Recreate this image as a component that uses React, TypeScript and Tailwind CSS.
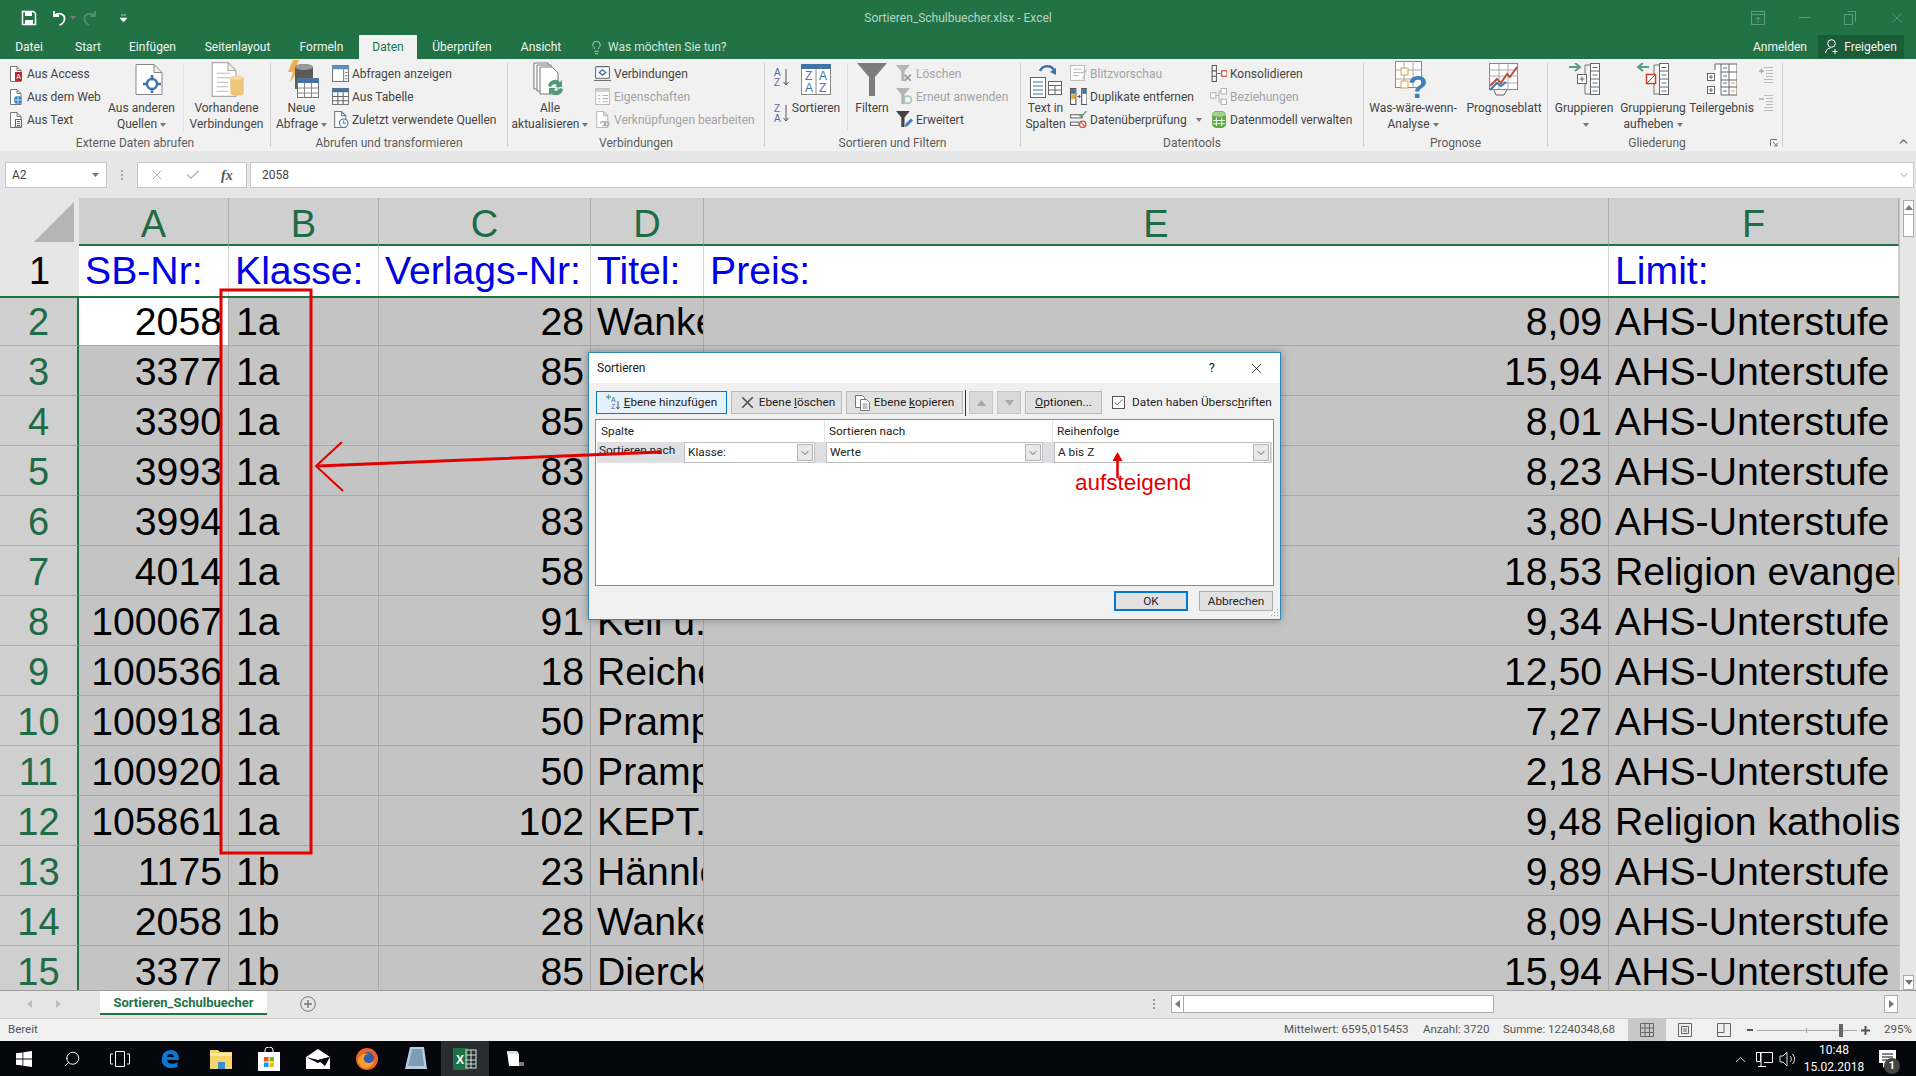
import { ReactNode } from "react";
import { Check, ChevronDown, ChevronUp, Lightbulb, Search, X } from "lucide-react";
import clsx from "clsx";

const rows = [
  { n: 2, a: "2058", b: "1a", c: "28", d: "Wanke", e: "8,09", f: "AHS-Unterstufe" },
  { n: 3, a: "3377", b: "1a", c: "85", d: "Dierck", e: "15,94", f: "AHS-Unterstufe" },
  { n: 4, a: "3390", b: "1a", c: "85", d: "", e: "8,01", f: "AHS-Unterstufe" },
  { n: 5, a: "3993", b: "1a", c: "83", d: "", e: "8,23", f: "AHS-Unterstufe" },
  { n: 6, a: "3994", b: "1a", c: "83", d: "", e: "3,80", f: "AHS-Unterstufe" },
  { n: 7, a: "4014", b: "1a", c: "58", d: "", e: "18,53", f: "Religion evangelisch" },
  { n: 8, a: "100067", b: "1a", c: "91", d: "Keil u.", e: "9,34", f: "AHS-Unterstufe" },
  { n: 9, a: "100536", b: "1a", c: "18", d: "Reichel", e: "12,50", f: "AHS-Unterstufe" },
  { n: 10, a: "100918", b: "1a", c: "50", d: "Pramper", e: "7,27", f: "AHS-Unterstufe" },
  { n: 11, a: "100920", b: "1a", c: "50", d: "Pramper", e: "2,18", f: "AHS-Unterstufe" },
  { n: 12, a: "105861", b: "1a", c: "102", d: "KEPT.", e: "9,48", f: "Religion katholisch" },
  { n: 13, a: "1175", b: "1b", c: "23", d: "Hännle", e: "9,89", f: "AHS-Unterstufe" },
  { n: 14, a: "2058", b: "1b", c: "28", d: "Wanke", e: "8,09", f: "AHS-Unterstufe" },
  { n: 15, a: "3377", b: "1b", c: "85", d: "Dierck", e: "15,94", f: "AHS-Unterstufe" },
];

const Caret = () => (
  <svg width="6" height="4" viewBox="0 0 6 4" className="inline-block ml-[3px] align-middle">
    <path d="M0 0h6L3 4z" fill="#777" />
  </svg>
);

const Page = ({ s = "#777" }: { s?: string }) => (
  <path d="M2.5.5h6.5l4 4v11h-10.500z M9 .5v4h4" fill="#fff" stroke={s} />
);

const Ic = ({ children, size = 16, box = 16 }: { children: ReactNode; size?: number; box?: number }) => (
  <svg width={size} height={size} viewBox={`0 0 ${box} ${box}`}>{children}</svg>
);

const AccessIcon = () => (
  <Ic>
    <Page />
    <rect x="7" y="6" width="7" height="9" fill="#b7282e" />
    <text x="8.300" y="13" fontSize="7" fill="#fff" fontFamily="Liberation Sans">A</text>
  </Ic>
);
const WebIcon = () => (
  <Ic>
    <Page />
    <circle cx="10" cy="11" r="4" fill="#3a7fc4" />
    <path d="M6 11h8M10 7v8" stroke="#fff" strokeWidth=".7" />
  </Ic>
);
const TextIcon = () => (
  <Ic>
    <Page />
    <rect x="7.500" y="7.500" width="6" height="7.500" fill="#fff" stroke="#666" />
    <path d="M9 9.500h3M9 11.500h3M9 13.500h3" stroke="#666" />
  </Ic>
);
const TableIcon = ({ lines = false, hd = "#3f74a8" }: { lines?: boolean; hd?: string }) => (
  <Ic size={17}>
    <rect x=".5" y=".5" width="15" height="15" fill="#fff" stroke="#777" />
    <rect x=".5" y=".5" width="15" height="3.500" fill={hd} />
    {lines ? (
      <path d="M5.500 4v11.500M10.500 4v11.500M1 8h14M1 12h14" stroke="#666" />
    ) : (
      <path d="M11 4v11.500M12.500 7h2M12.500 10h2M12.500 13h2" stroke="#777" />
    )}
  </Ic>
);
const RecentIcon = () => (
  <Ic size={17}>
    <Page />
    <circle cx="11" cy="11.500" r="4" fill="#fff" stroke="#3f74a8" />
    <path d="M11 9v2.500h2" stroke="#3f74a8" fill="none" />
  </Ic>
);
const OtherSources = () => (
  <Ic size={32} box={32}>
    <path d="M3 .5h18l8 8v22h-26z M21 .5v8h8" fill="#fff" stroke="#888" />
    <circle cx="19" cy="20" r="5" fill="none" stroke="#3f74a8" strokeWidth="2.500" />
    <path d="M19 11v4M19 25v4M10 20h4M24 20h4" stroke="#3f74a8" strokeWidth="2.500" />
  </Ic>
);
const Existing = () => (
  <Ic size={36} box={32}>
    <path d="M2 .5h14l7 7v23h-21z M16 .5v7h7" fill="#fff" stroke="#aaa" />
    <path d="M6 10h12M6 14h12M6 18h10M6 22h10M6 26h10" stroke="#bbb" />
    <path d="M18 14a6 2 0 0 1 12 0v14a6 2 0 0 1-12 0z" fill="#edc67a" />
    <ellipse cx="24" cy="14" rx="6" ry="2" fill="#f5dca5" />
  </Ic>
);
const NewQuery = () => (
  <svg width="34" height="40" viewBox="0 0 34 40">
    <path d="M8 0h6l-4 9h5l-10 13 3-10h-5z" fill="#eab04a" />
    <path d="M10 7a9 3 0 0 1 18 0v22h-18z" fill="#5b5b5b" />
    <ellipse cx="19" cy="7" rx="9" ry="3" fill="#9a9a9a" />
    <rect x="12.500" y="18.500" width="21" height="19" fill="#fff" stroke="#777" />
    <rect x="12.500" y="18.500" width="21" height="4.500" fill="#3f74a8" />
    <path d="M19.500 23v14M26.500 23v14M13 28h20M13 33h20" stroke="#888" />
  </svg>
);
const Refresh = () => (
  <svg width="34" height="38" viewBox="0 0 34 38">
    <path d="M1 2h14v26h-14z" fill="#fff" stroke="#777" />
    <path d="M4 4h14v26h-14z" fill="#fff" stroke="#777" />
    <path d="M7 6h12l6 6v21h-18z" fill="#fff" stroke="#777" />
    <path d="M15 25a7 7 0 0 1 12-4l2-2v7h-7l2-2a4 4 0 0 0-6 2zM30 28a7 7 0 0 1-12 4l-2 2v-7h7l-2 2a4 4 0 0 0 6-2z" fill="#4f9a7c" />
  </svg>
);
const ConnIcon = () => (
  <Ic size={17}>
    <rect x="1.500" y="1.500" width="13" height="11" rx="1" fill="#fff" stroke="#666" />
    <path d="M0 14.500h16" stroke="#666" />
    <path d="M8 4.500l3 2.500-3 2.500-3-2.500z" fill="none" stroke="#3f74a8" strokeWidth="1.300" />
  </Ic>
);
const PropIcon = () => (
  <Ic size={17}>
    <rect x="1.500" y=".5" width="13" height="15" fill="#fff" stroke="#bbb" />
    <rect x="1.500" y=".5" width="13" height="3" fill="#ccc" />
    <path d="M4 7h2M8 7h5M4 10h2M8 10h5M4 13h2M8 13h5" stroke="#b5b5b5" />
  </Ic>
);
const LinkIcon = () => (
  <Ic size={17}>
    <Page s="#bbb" />
    <path d="M6 12a2 2 0 0 1 2-2h1a2 2 0 0 1 0 4H8M9 12h3a2 2 0 0 1 0 0" fill="none" stroke="#a8a8a8" />
    <circle cx="12" cy="12" r="2" fill="none" stroke="#a8a8a8" />
  </Ic>
);
const AZ = ({ up }: { up?: boolean }) => (
  <svg width="16" height="21" viewBox="0 0 16 21" fontFamily="Liberation Sans" fontSize="10">
    <text x="0" y="9" fill={up ? "#7b5ea7" : "#3f74a8"}>{up ? "Z" : "A"}</text>
    <text x="0" y="19" fill={up ? "#3f74a8" : "#7b5ea7"}>{up ? "A" : "Z"}</text>
    <path d="M12 2v16M9.500 15l2.500 3 2.500-3" fill="none" stroke="#555" />
  </svg>
);
const SortBig = () => (
  <svg width="30" height="31" viewBox="0 0 30 31" fontFamily="Liberation Sans" fontSize="12">
    <rect x=".5" y=".5" width="29" height="30" fill="#fff" stroke="#888" />
    <rect x="0" y="0" width="30" height="5" fill="#3f74a8" />
    <path d="M15 5v26" stroke="#888" />
    <text x="4" y="16" fill="#7b5ea7">Z</text>
    <text x="4" y="28" fill="#3f74a8">A</text>
    <text x="18" y="16" fill="#3f74a8">A</text>
    <text x="18" y="28" fill="#7b5ea7">Z</text>
  </svg>
);
const Funnel = ({ size = 30 }: { size?: number }) => (
  <svg width={size} height={size + 3} viewBox="0 0 30 33">
    <path d="M0 0h30L18 14v19h-6V14z" fill="#7d7d7d" />
  </svg>
);
const SmallFunnel = ({ mark }: { mark: "x" | "r" | "p" }) => (
  <Ic size={17}>
    <path d="M0 0h13L8 6v9H5V6z" fill={mark === "p" ? "#444" : "#b5b5b5"} />
    {mark === "x" && <path d="M8 9l6 6M14 9l-6 6" stroke="#9a9a9a" strokeWidth="1.500" />}
    {mark === "r" && <circle cx="11" cy="11" r="3.500" fill="none" stroke="#9fc4b4" strokeWidth="1.500" />}
    {mark === "p" && <path d="M8 15l1-3 5-5 2 2-5 5z" fill="#3f7fc0" />}
  </Ic>
);
const TextCols = () => (
  <svg width="32" height="36" viewBox="0 0 32 36">
    <path d="M10 9a8 8 0 0 1 14-1" fill="none" stroke="#3f74a8" strokeWidth="2.500" />
    <path d="M20 10l6-4v7z" fill="#3f74a8" />
    <rect x=".5" y="15.500" width="15" height="20" fill="#fff" stroke="#666" />
    <path d="M3 20h10M3 24h10M3 28h10M3 32h10" stroke="#3f74a8" />
    <rect x="18.500" y="19.500" width="13" height="13" fill="#fff" stroke="#666" />
    <path d="M19 23.500h12M25 23.500v9M19 28h12" stroke="#666" />
  </svg>
);
const Flash = () => (
  <Ic size={17}>
    <rect x=".5" y=".5" width="13" height="14" fill="#fff" stroke="#bbb" />
    <path d="M3 4h8M3 7h8M3 10h5M11 8l4-3-3 8" fill="none" stroke="#bbb" />
  </Ic>
);
const Dupes = () => (
  <Ic size={17}>
    <rect x=".5" y=".5" width="5" height="15" fill="#fff" stroke="#555" />
    <rect x="11" y=".5" width="5" height="15" fill="#fff" stroke="#555" />
    <rect x="1" y="1" width="4" height="4.500" fill="#3f74a8" />
    <rect x="1" y="6" width="4" height="4.500" fill="#e0a93f" />
    <rect x="11.500" y="1" width="4" height="4.500" fill="#3f74a8" />
    <path d="M7 8h3M9 6.500v3" stroke="#555" />
  </Ic>
);
const Validate = () => (
  <Ic size={17}>
    <rect x=".5" y="3.500" width="11" height="3" fill="#fff" stroke="#666" />
    <rect x=".5" y="10.500" width="8" height="3" fill="#fff" stroke="#666" />
    <path d="M8 3l2.500 2.500L15.500 0" fill="none" stroke="#5a9e6f" strokeWidth="1.300" />
    <circle cx="12" cy="12.500" r="3" fill="#fff" stroke="#d2513f" strokeWidth="1.200" />
    <path d="M10 10.500l4 4" stroke="#d2513f" strokeWidth="1.200" />
  </Ic>
);
const Consolidate = () => (
  <Ic size={17}>
    <path d="M2 .5h4v15h-4zM2 5.500h4M2 10.500h4" fill="#fff" stroke="#555" />
    <path d="M7 8h3" stroke="#3f74a8" />
    <rect x="11" y="5.500" width="5" height="5" fill="#fff" stroke="#c8382e" />
  </Ic>
);
const Relations = () => (
  <Ic size={17}>
    <rect x=".5" y="4.500" width="5" height="5" fill="#fff" stroke="#b5b5b5" />
    <rect x="10.500" y=".5" width="5" height="5" fill="#fff" stroke="#b5b5b5" />
    <rect x="10.500" y="10.500" width="5" height="5" fill="#fff" stroke="#b5b5b5" />
    <path d="M5.500 7h3v-4h2M8.500 7v6h2" fill="none" stroke="#b5b5b5" />
  </Ic>
);
const DataModel = () => (
  <Ic size={17}>
    <path d="M2 3a6 3 0 0 1 13 0v10a6 3 0 0 1-13 0z" fill="#5ea647" />
    <ellipse cx="8.500" cy="3" rx="6.500" ry="2.500" fill="#a7d08f" />
    <path d="M6 6v8M11 6v8M3 9h11M3 12h11" stroke="#e9f4e3" />
  </Ic>
);
const WhatIf = () => (
  <svg width="36" height="38" viewBox="0 0 36 38">
    <rect x=".5" y=".5" width="26" height="26" fill="#fff" stroke="#888" />
    <path d="M.5 9h26M.5 18h26M9 .5v26M18 .5v26" stroke="#a8a8a8" />
    <rect x="6" y="7" width="7" height="7" fill="#fff" stroke="#d9a04b" />
    <rect x="6" y="20" width="7" height="7" fill="#fff" stroke="#d9a04b" />
    <text x="13" y="37" fontSize="32" fontWeight="700" fill="#3f7fc0" fontFamily="Liberation Sans">?</text>
  </svg>
);
const Forecast = () => (
  <svg width="30" height="34" viewBox="0 0 30 34">
    <rect x=".5" y=".5" width="28" height="26" fill="#fff" stroke="#888" />
    <path d="M.5 7h28M.5 13h28M.5 20h28M10 .5v26M19 .5v26" stroke="#aaa" />
    <path d="M1 23l7-7 4 4 6-9 3 3 7-10" fill="none" stroke="#b9533f" strokeWidth="2" />
    <path d="M1 27l7-7 4 3 5-4" fill="none" stroke="#3f74a8" strokeWidth="2" />
    <path d="M5 27l2 5h8l3-5" fill="none" stroke="#666" />
  </svg>
);
const OutlineCol = ({ x }: { x: number }) => (
  <g>
    <rect x={x} y=".5" width="9" height="31" fill="#fff" stroke="#666" />
    <path d={`M${x} 8h9M${x} 16h9M${x} 24h9`} stroke="#666" />
    <path d={`M${x + 2} 4.500h5M${x + 2} 12h5M${x + 2} 20h5M${x + 2} 28h5`} stroke="#3f74a8" />
  </g>
);
const GroupIcon = ({ ungroup }: { ungroup?: boolean }) => (
  <svg width="32" height="33" viewBox="0 0 32 33">
    <path d={ungroup ? "M12 4H2M6 0L1 4l5 4" : "M1 4h10M7 0l5 4-5 4"} fill="none" stroke="#5a9a87" strokeWidth="2" />
    <path d="M22 2h-5v29h5" fill="none" stroke="#777" />
    <rect x="9.500" y="11.500" width="9" height="9" fill="#fff" stroke={ungroup ? "#c8452f" : "#666"} strokeWidth={ungroup ? 1.500 : 1} />
    {ungroup ? <path d="M10 20l8-8" stroke="#c8452f" /> : <path d="M11.500 16h5M14 13.500v5" stroke="#666" />}
    <OutlineCol x={22.500} />
  </svg>
);
const Subtotal = () => (
  <svg width="30" height="33" viewBox="0 0 30 33">
    <path d="M8 1h22v31H8z" fill="#fff" />
    <path d="M14 1h-6v6M30 1H14v31h16V1zM22 1v31M14 9h16M14 17h16M14 24h16" fill="none" stroke="#666" />
    <rect x=".5" y="10.500" width="7" height="7" fill="#fff" stroke="#666" />
    <rect x=".5" y="23.500" width="7" height="7" fill="#fff" stroke="#666" />
    <path d="M2 14h4M4 12v4M2 27h4M4 25v4" stroke="#666" />
    <path d="M16 5h4M16 13h4M16 20h4M16 28h4" stroke="#3f74a8" />
    <path d="M24 20h4M24 28h4" stroke="#d9a04b" />
  </svg>
);
const MiniOutline = ({ plus }: { plus?: boolean }) => (
  <svg width="15" height="16" viewBox="0 0 15 16">
    <path d="M5 .5h9M7 3.500h7M7 6.500h7M7 9.500h7M5 12.500h9M5 15.500h9" stroke="#bdbdbd" />
    <path d={plus ? "M0 4h5M2.500 1.500v5" : "M0 4h5"} stroke="#8db6a8" strokeWidth="1.300" />
  </svg>
);

const Small = ({ icon, label, off, caret }: { icon: ReactNode; label: string; off?: boolean; caret?: boolean }) => (
  <div className={clsx("flex items-center h-[23px] gap-[3px] whitespace-nowrap", off && "text-[#a3a3a3]")}>
    <span className="w-[17px] h-[17px] flex items-center justify-center shrink-0">{icon}</span>
    <span>{label}</span>
    {caret && <Caret />}
  </div>
);

const Large = ({ icon, lines, className, caret }: { icon: ReactNode; lines: string[]; className: string; caret?: boolean }) => (
  <div className={clsx("flex flex-col items-center shrink-0", className)}>
    <div className="h-[41px] flex items-center justify-center">{icon}</div>
    {lines.map((l, i) => (
      <div key={l} className="h-[16px] leading-[16px] whitespace-nowrap">
        {l}
        {caret && lines.length > 1 && i === lines.length - 1 && <Caret />}
      </div>
    ))}
    {caret && lines.length === 1 && (
      <div className="h-[16px] leading-[16px]"><Caret /></div>
    )}
  </div>
);

const Col = ({ children, className }: { children: ReactNode; className?: string }) => (
  <div className={clsx("flex flex-col pt-[3px] shrink-0", className)}>{children}</div>
);

const Group = ({ title, className, titleClass, children }: { title: string; className: string; titleClass?: string; children: ReactNode }) => (
  <div className={clsx("flex shrink-0", className)}>
    <div className="flex-1 flex flex-col min-w-0">
      <div className="h-[76px] flex">{children}</div>
      <div className={clsx("h-[16px] leading-[16px] text-center text-[#5c5c5c] whitespace-nowrap", titleClass)}>{title}</div>
    </div>
    <div className="w-px my-[4px] bg-[#d2d2d2]" />
  </div>
);

const TitleBar = () => (
  <div className="h-[35px] bg-[#217346] flex items-center relative shrink-0">
    <div className="flex items-center pl-[21px]">
      <svg width="16" height="16" viewBox="0 0 16 16">
        <path d="M1.500 1.500h11l2 2v11h-13z" fill="none" stroke="#fff" strokeWidth="1.500" />
        <path d="M4 2h7v4H4zM4 10h8v5H4z" fill="#fff" />
      </svg>
      <div className="flex items-center ml-[14px]">
        <svg width="16" height="16" viewBox="0 0 16 16">
          <path d="M3 1v5h5M3.500 5.500C8 2 14 4 13.500 9c-.3 3-2 5-5 6" fill="none" stroke="#fff" strokeWidth="1.800" />
        </svg>
        <Caret />
      </div>
      <div className="flex items-center ml-[6px]">
        <svg width="16" height="16" viewBox="0 0 16 16">
          <path d="M13 1v5H8M12.500 5.500C8 2 2 4 2.500 9c.3 3 2 5 5 6" fill="none" stroke="#4f8f6c" strokeWidth="1.800" />
        </svg>
      </div>
      <svg width="7" height="8" viewBox="0 0 7 8" className="ml-[22px]">
        <path d="M1 1h5M0 4h7L3.500 8z" fill="#fff" stroke="#fff" strokeWidth=".6" />
      </svg>
    </div>
    <div className="absolute left-[838px] w-[240px] text-center text-[#b7d3c3] whitespace-nowrap">Sortieren_Schulbuecher.xlsx - Excel</div>
    <div className="ml-auto flex items-center text-[#5f9c7c]">
      <span className="w-[46px] flex justify-center">
        <svg width="14" height="14" viewBox="0 0 14 14"><path d="M.5.5h13v13H.5zM0 3.500h14M7 12V6M4.500 8.500L7 6l2.500 2.500" fill="none" stroke="currentColor" /></svg>
      </span>
      <span className="w-[46px] flex justify-center"><span className="w-[11px] h-px bg-current" /></span>
      <span className="w-[46px] flex justify-center">
        <svg width="12" height="14" viewBox="0 0 12 14"><path d="M3.500.5h8v10M.5 3.500h8v10h-8z" fill="none" stroke="currentColor" /></svg>
      </span>
      <span className="w-[38px] ml-[5px] flex justify-center"><X size={18} strokeWidth={1} /></span>
    </div>
  </div>
);

const Tab = ({ label, className }: { label: string; className: string }) => (
  <div className={clsx("text-center leading-[24px] shrink-0", className)}>{label}</div>
);

const TabRow = () => (
  <div className="h-[24px] bg-[#217346] flex text-[#f2f7f4] shrink-0">
    <Tab label="Datei" className="w-[58px]" />
    <Tab label="Start" className="w-[60px]" />
    <Tab label="Einfügen" className="w-[69px]" />
    <Tab label="Seitenlayout" className="w-[101px]" />
    <Tab label="Formeln" className="w-[71px] pr-[4px]" />
    <Tab label="Daten" className="w-[58px] bg-[#f1f1f1] text-[#217346]" />
    <Tab label="Überprüfen" className="w-[90px]" />
    <Tab label="Ansicht" className="w-[68px]" />
    <div className="flex items-center gap-[4px] pl-[14px] text-[#d4e5db]">
      <Lightbulb size={15} strokeWidth={1.200} />
      <span>Was möchten Sie tun?</span>
    </div>
    <div className="ml-auto flex">
      <div className="leading-[24px] pr-[11px]">Anmelden</div>
      <div className="w-[86px] h-[23px] bg-[#1a5c38] flex items-center justify-center gap-[4px] mr-[12px]">
        <svg width="15" height="15" viewBox="0 0 15 15">
          <circle cx="6.500" cy="4.500" r="3.800" fill="none" stroke="#fff" />
          <path d="M.5 14c.5-3 2.500-5 5-5M10 10v5M7.500 12.500h5" fill="none" stroke="#fff" />
        </svg>
        <span>Freigeben</span>
      </div>
    </div>
  </div>
);

const Ribbon = () => (
  <div className="h-[92px] bg-[#f1f1f1] flex text-[#444] shrink-0">
    <Group title="Externe Daten abrufen" className="w-[271px]">
      <Col className="w-[100px] pl-[7px]">
        <Small icon={<AccessIcon />} label="Aus Access" />
        <Small icon={<WebIcon />} label="Aus dem Web" />
        <Small icon={<TextIcon />} label="Aus Text" />
      </Col>
      <Large icon={<span className="pl-[14px] flex"><OtherSources /></span>} lines={["Aus anderen", "Quellen"]} caret className="w-[83px]" />
      <div className="w-px my-[4px] bg-[#e2e2e2]" />
      <Large icon={<span className="pl-[3px] flex"><Existing /></span>} lines={["Vorhandene", "Verbindungen"]} className="w-[85px]" />
    </Group>
    <Group title="Abrufen und transformieren" className="w-[237px]">
      <Large icon={<NewQuery />} lines={["Neue", "Abfrage"]} caret className="w-[61px]" />
      <Col>
        <Small icon={<TableIcon hd="#5b8fc0" />} label="Abfragen anzeigen" />
        <Small icon={<TableIcon lines />} label="Aus Tabelle" />
        <Small icon={<RecentIcon />} label="Zuletzt verwendete Quellen" />
      </Col>
    </Group>
    <Group title="Verbindungen" className="w-[257px]">
      <Large icon={<Refresh />} lines={["Alle", "aktualisieren"]} caret className="w-[84px]" />
      <Col className="pl-[2px]">
        <Small icon={<ConnIcon />} label="Verbindungen" />
        <Small icon={<PropIcon />} label="Eigenschaften" off />
        <Small icon={<LinkIcon />} label="Verknüpfungen bearbeiten" off />
      </Col>
    </Group>
    <Group title="Sortieren und Filtern" className="w-[256px]">
      <div className="w-[27px] pl-[9px] pt-[8px] flex flex-col gap-[15px] shrink-0">
        <AZ />
        <AZ up />
      </div>
      <Large icon={<SortBig />} lines={["Sortieren"]} className="w-[48px]" />
      <div className="w-px my-[5px] ml-[7px] bg-[#dcdcdc]" />
      <Large icon={<Funnel />} lines={["Filtern"]} className="w-[48px]" />
      <Col>
        <Small icon={<SmallFunnel mark="x" />} label="Löschen" off />
        <Small icon={<SmallFunnel mark="r" />} label="Erneut anwenden" off />
        <Small icon={<SmallFunnel mark="p" />} label="Erweitert" />
      </Col>
    </Group>
    <Group title="Datentools" className="w-[343px]">
      <Large icon={<TextCols />} lines={["Text in", "Spalten"]} className="w-[49px]" />
      <Col className="w-[140px]">
        <Small icon={<Flash />} label="Blitzvorschau" off />
        <Small icon={<Dupes />} label="Duplikate entfernen" />
        <div className="flex items-center">
          <Small icon={<Validate />} label="Datenüberprüfung" />
          <span className="ml-[6px]"><Caret /></span>
        </div>
      </Col>
      <Col>
        <Small icon={<Consolidate />} label="Konsolidieren" />
        <Small icon={<Relations />} label="Beziehungen" off />
        <Small icon={<DataModel />} label="Datenmodell verwalten" />
      </Col>
    </Group>
    <Group title="Prognose" className="w-[184px]">
      <Large icon={<WhatIf />} lines={["Was-wäre-wenn-", "Analyse"]} caret className="w-[98px]" />
      <Large icon={<Forecast />} lines={["Prognoseblatt"]} className="w-[84px]" />
    </Group>
    <Group title="Gliederung" titleClass="pr-[16px]" className="w-[235px] relative">
      <Large icon={<GroupIcon />} lines={["Gruppieren"]} caret className="w-[72px]" />
      <Large icon={<GroupIcon ungroup />} lines={["Gruppierung", "aufheben"]} caret className="w-[66px]" />
      <Large icon={<Subtotal />} lines={["Teilergebnis"]} className="w-[71px]" />
      <div className="flex flex-col gap-[12px] pt-[8px] pl-[2px]">
        <MiniOutline plus />
        <MiniOutline />
      </div>
      <svg width="8" height="8" viewBox="0 0 8 8" className="absolute right-[5px] bottom-[4px]">
        <path d="M.5 7V.5H7M3 3l4 4M7 4v3H4" fill="none" stroke="#777" />
      </svg>
    </Group>
    <div className="flex-1 flex items-end justify-end pr-[6px] pb-[3px]">
      <ChevronUp size={13} strokeWidth={2.500} className="text-[#666]" />
    </div>
  </div>
);

const FormulaBar = () => (
  <div className="h-[47px] bg-[#e6e6e6] pt-[11px] flex gap-[3px] pl-[5px] pr-[2px] text-[#444] shrink-0">
    <div className="w-[102px] h-[26px] bg-white border border-[#c6c6c6] flex items-center justify-between pl-[6px] pr-[7px]">
      <span>A2</span>
      <svg width="7" height="4" viewBox="0 0 7 4"><path d="M0 0h7L3.500 4z" fill="#777" /></svg>
    </div>
    <div className="w-[24px] h-[26px] flex flex-col items-center justify-center gap-[2px]">
      <span className="w-[2px] h-[2px] bg-[#a8a8a8]" />
      <span className="w-[2px] h-[2px] bg-[#a8a8a8]" />
      <span className="w-[2px] h-[2px] bg-[#a8a8a8]" />
    </div>
    <div className="w-[110px] h-[26px] bg-white border border-[#c6c6c6] flex items-center pl-[11px] gap-[20px] text-[#b5b5b5]">
      <X size={16} strokeWidth={1.500} />
      <Check size={16} strokeWidth={2} />
      <span className="italic text-[#555] text-[14px] font-bold [font-family:'Liberation_Serif',serif]">fx</span>
    </div>
    <div className="flex-1 h-[26px] bg-white border border-[#c6c6c6] flex items-center justify-between pl-[11px] pr-[3px]">
      <span>2058</span>
      <ChevronDown size={12} className="text-[#aaa]" />
    </div>
  </div>
);

const headCols = [
  { t: "A", w: "w-[150px]" },
  { t: "B", w: "w-[150px]" },
  { t: "C", w: "w-[212px]" },
  { t: "D", w: "w-[113px]" },
  { t: "E", w: "w-[905px]" },
  { t: "F", w: "w-[290px]" },
];

const cell = "h-[50px] flex items-center overflow-hidden whitespace-nowrap shrink-0 leading-[44px]";

const Sheet = () => (
  <div className="h-[792px] flex overflow-hidden shrink-0 bg-[#e6e6e6] text-[39.200px] text-black [font-family:'Liberation_Sans',sans-serif]">
    <div className="w-[1899px]">
      <div className="h-[48px] flex">
        <div className="w-[79px] h-[48px] bg-[#e6e6e6] pl-[34px] pt-[4px] shrink-0">
          <svg width="40" height="40" viewBox="0 0 40 40"><path d="M40 0v40H0z" fill="#b4b4b4" /></svg>
        </div>
        {headCols.map((c) => (
          <div key={c.t} className={clsx("h-[48px] bg-[#cfcfcf] border-r border-[#adadad] border-b-2 border-b-[#217346] text-[38px] leading-[42px] text-[#1e6b45] flex items-center justify-center pt-[5px]", c.w)}>{c.t}</div>
        ))}
      </div>
      <div className="flex h-[50px] border-b-2 border-[#217346] box-content -mb-[2px] relative">
        <div className="w-[79px] bg-[#e6e6e6] flex items-center justify-center text-[38px] leading-[44px] shrink-0">1</div>
        {["SB-Nr:", "Klasse:", "Verlags-Nr:", "Titel:", "Preis:", "Limit:"].map((t, i) => (
          <div key={t} className={clsx(cell, "bg-white border-r border-[#d4d4d4] text-[#0000e6] pl-[6px]", headCols[i].w)}>{t}</div>
        ))}
      </div>
      {rows.map((r) => (
        <div key={r.n} className="flex h-[50px]">
          <div className={clsx(cell, "w-[79px] bg-[#cfcfcf] border-b border-[#adadad] border-r-2 border-r-[#217346] text-[38px] text-[#1e6b45] justify-center pt-[2px]")}>{r.n}</div>
          <div className={clsx(cell, "w-[150px] border-r border-b justify-end pr-[6px] pt-[2px] border-[#a9a9a9]", r.n === 2 ? "bg-white" : "bg-[#c4c4c4]")}>{r.a}</div>
          <div className={clsx(cell, "w-[150px] bg-[#c4c4c4] border-r border-b border-[#a9a9a9] pl-[7px] pt-[2px]")}>{r.b}</div>
          <div className={clsx(cell, "w-[212px] bg-[#c4c4c4] border-r border-b border-[#a9a9a9] justify-end pr-[6px] pt-[2px]")}>{r.c}</div>
          <div className={clsx(cell, "w-[113px] bg-[#c4c4c4] border-r border-b border-[#a9a9a9] pl-[6px] pt-[2px]")}>{r.d}</div>
          <div className={clsx(cell, "w-[905px] bg-[#c4c4c4] border-r border-b border-[#a9a9a9] justify-end pr-[6px] pt-[2px]")}>{r.e}</div>
          <div className={clsx(cell, "w-[290px] bg-[#c4c4c4] border-b border-[#a9a9a9] pl-[6px] pt-[2px]")}>{r.f}</div>
        </div>
      ))}
    </div>
    <div className="flex-1 flex flex-col items-center pt-[2px] pl-[3px] pr-[2px] border-l border-[#c6c6c6]">
      <div className="w-full h-[15px] bg-white border border-[#ababab] flex items-center justify-center">
        <svg width="8" height="5" viewBox="0 0 8 5"><path d="M4 0l4 5H0z" fill="#777" /></svg>
      </div>
      <div className="w-full h-[22px] bg-white border border-t-0 border-[#ababab]" />
      <div className="flex-1" />
      <div className="w-full h-[15px] bg-white border border-[#ababab] flex items-center justify-center">
        <svg width="8" height="5" viewBox="0 0 8 5"><path d="M0 0h8L4 5z" fill="#777" /></svg>
      </div>
    </div>
  </div>
);

const SheetTabs = () => (
  <div className="h-[29px] bg-[#e6e6e6] border-t border-[#9a9a9a] border-b border-b-[#c8c8c8] flex items-start text-[#444] shrink-0">
    <div className="w-[100px] flex items-center h-[26px] pl-[27px] gap-[24px] shrink-0">
      <svg width="5" height="8" viewBox="0 0 5 8"><path d="M5 0v8L0 4z" fill="#bdbdbd" /></svg>
      <svg width="5" height="8" viewBox="0 0 5 8"><path d="M0 0v8l5-4z" fill="#bdbdbd" /></svg>
    </div>
    <div className="w-[167px] h-[24px] bg-white border-b-2 border-[#217346] text-[#217346] font-bold text-[13px] text-center leading-[24px] shrink-0">Sortieren_Schulbuecher</div>
    <div className="w-[82px] h-[26px] flex items-center justify-center shrink-0">
      <svg width="16" height="16" viewBox="0 0 16 16"><circle cx="8" cy="8" r="7.300" fill="none" stroke="#777" /><path d="M4 8h8M8 4v8" stroke="#777" strokeWidth="1.400" /></svg>
    </div>
    <div className="flex flex-col gap-[2px] ml-[804px] mt-[8px] shrink-0">
      <span className="w-[2px] h-[2px] bg-[#999]" />
      <span className="w-[2px] h-[2px] bg-[#999]" />
      <span className="w-[2px] h-[2px] bg-[#999]" />
    </div>
    <div className="ml-[16px] mt-[4px] flex h-[18px] w-[727px] shrink-0">
      <div className="w-[13px] bg-white border border-[#ababab] flex items-center justify-center">
        <svg width="5" height="8" viewBox="0 0 5 8"><path d="M5 0v8L0 4z" fill="#777" /></svg>
      </div>
      <div className="w-[310px] bg-white border border-l-0 border-[#ababab]" />
      <div className="flex-1" />
      <div className="w-[14px] bg-white border border-[#ababab] flex items-center justify-center">
        <svg width="5" height="8" viewBox="0 0 5 8"><path d="M0 0v8l5-4z" fill="#777" /></svg>
      </div>
    </div>
  </div>
);

const StatusBar = () => (
  <div className="h-[22px] bg-[#f0f0f0] flex items-center text-[#555] text-[11.500px] shrink-0">
    <span className="pl-[8px]">Bereit</span>
    <div className="ml-auto flex items-center h-full">
      <span className="w-[139px]">Mittelwert: 6595,015453</span>
      <span className="w-[80px]">Anzahl: 3720</span>
      <span className="w-[125px]">Summe: 12240348,68</span>
      <div className="w-[38px] h-full bg-[#c8c8c8] flex items-center justify-center">
        <svg width="14" height="14" viewBox="0 0 14 14"><path d="M.5.5h13v13H.5zM5 .5v13M9.500.5v13M.5 5h13M.5 9.500h13" fill="none" stroke="#666" /></svg>
      </div>
      <div className="w-[38px] flex items-center justify-center">
        <svg width="14" height="14" viewBox="0 0 14 14"><path d="M.5.5h13v13H.5zM3.500 3.500h7v7h-7zM5 6h4M5 8h4" fill="none" stroke="#666" /></svg>
      </div>
      <div className="w-[40px] flex items-center justify-center">
        <svg width="14" height="14" viewBox="0 0 14 14"><path d="M.5.5h13v13H.5zM.5 9.500H7V.5" fill="none" stroke="#666" /></svg>
      </div>
      <div className="w-[140px] flex items-center pl-[3px]">
        <span className="w-[6px] h-[2px] bg-[#555] shrink-0" />
        <div className="relative w-[100px] h-px bg-[#aaa] mx-[4px]">
          <span className="absolute left-[49px] -top-[2px] w-px h-[5px] bg-[#aaa]" />
          <span className="absolute left-[82px] -top-[6px] w-[4px] h-[13px] bg-[#666]" />
        </div>
        <svg width="9" height="9" viewBox="0 0 9 9"><path d="M0 4.500h9M4.500 0v9" stroke="#555" strokeWidth="2" /></svg>
      </div>
      <span className="w-[32px]">295%</span>
    </div>
  </div>
);

const Taskbar = () => (
  <div className="h-[36px] bg-[#05070c] flex items-center text-white text-[12px] shrink-0 relative">
    <div className="w-[48px] flex justify-center">
      <svg width="16" height="16" viewBox="0 0 16 16"><path d="M0 2.300l6.500-.9v6.200H0zM7.300 1.300L16 0v7.600H7.300zM0 8.400h6.500v6.200L0 13.700zM7.300 8.400H16V16l-8.700-1.200z" fill="#fff" /></svg>
    </div>
    <div className="w-[48px] flex justify-center"><Search size={18} strokeWidth={1.300} className="-scale-x-100" /></div>
    <div className="w-[48px] flex justify-center">
      <svg width="20" height="16" viewBox="0 0 20 16"><path d="M5.500.5h9v15h-9zM3 3H.5v10H3M17 3h2.500v10H17" fill="none" stroke="#fff" /></svg>
    </div>
    <div className="w-[52px] flex justify-center">
      <svg width="20" height="20" viewBox="0 0 20 20"><path d="M2 10C2 4 6 1 11 1c5 0 8 3.500 8 10H7c.3 4 5.500 5 10.500 2.500v4.500C11 20.500 1 19 2 10zM7 8h7c0-4-6.500-4-7 0z" fill="#0a78d7" /></svg>
    </div>
    <div className="w-[49px] flex justify-center">
      <svg width="22" height="20" viewBox="0 0 22 20"><path d="M0 1h8l2 2h12v17H0z" fill="#f6d56c" /><path d="M0 4h22v3H0z" fill="#fbe9a6" /><rect x="8" y="13" width="7" height="7" fill="#3a8fc7" /></svg>
    </div>
    <div className="w-[48px] flex justify-center">
      <svg width="22" height="24" viewBox="0 0 22 24"><rect y="5" width="22" height="19" fill="#fff" /><path d="M7 7V3a4 3 0 0 1 8 0v4" fill="none" stroke="#fff" /><rect x="6" y="10" width="4.500" height="4.500" fill="#f25022" /><rect x="11.500" y="10" width="4.500" height="4.500" fill="#7fba00" /><rect x="6" y="15.500" width="4.500" height="4.500" fill="#00a4ef" /><rect x="11.500" y="15.500" width="4.500" height="4.500" fill="#ffb900" /></svg>
    </div>
    <div className="w-[49px] flex justify-center">
      <svg width="24" height="20" viewBox="0 0 24 20"><path d="M0 8l12-8 12 8v12H0z" fill="#fff" /><path d="M0 8l12 6 12-6-12 3z" fill="#05070c" /><path d="M12 11l12-3-5 9z" fill="#05070c" /></svg>
    </div>
    <div className="w-[49px] flex justify-center">
      <svg width="22" height="22" viewBox="0 0 22 22"><circle cx="11" cy="11" r="11" fill="#e8642b" /><circle cx="12" cy="10" r="6" fill="#3b5ba8" /><path d="M2 13c1-5 5-9 11-7-4 0-6 3-5 6s6 5 11 0c-2 6-7 9-11 8-3-1-5-4-6-7z" fill="#f7a12c" /></svg>
    </div>
    <div className="w-[50px] flex justify-center">
      <svg width="24" height="26" viewBox="0 0 24 26"><path d="M6 1h14l3 22H1z" fill="#b6cfe0" /><path d="M8 3h10l2 17H4z" fill="#7d9cb5" /></svg>
    </div>
    <div className="w-[48px] h-full bg-[#2a2d30] flex justify-center items-center">
      <svg width="24" height="24" viewBox="0 0 24 24">
        <rect x="0" y="1" width="15" height="22" fill="#1e7145" />
        <rect x="13" y="3" width="10" height="18" fill="none" stroke="#cfe3d8" />
        <path d="M13 8h10M13 13h10M13 17h10M18 3v18" stroke="#cfe3d8" />
        <text x="3" y="17" fontSize="12" fontWeight="700" fill="#fff" fontFamily="Liberation Sans">X</text>
      </svg>
    </div>
    <div className="w-[52px] flex justify-center">
      <svg width="18" height="16" viewBox="0 0 18 16"><path d="M1 0h10l2 3v12H3z" fill="#fff" /><path d="M1 0h10v3H1z" fill="#cde" /><path d="M13 11h5v4h-5z" fill="#778" /></svg>
    </div>
    <div className="ml-auto flex items-center h-full">
      <ChevronUp size={17} strokeWidth={1.200} className="mr-[7px]" />
      <svg width="17" height="17" viewBox="0 0 17 17" className="mr-[6px]"><path d="M.5 1.500h16v10H8M5 1.500v14M.5 1.500h4v9h-4zM2 15.500h8" fill="none" stroke="#fff" /></svg>
      <svg width="17" height="16" viewBox="0 0 17 16" className="mr-[8px]"><path d="M1 5h3l4-4v14l-4-4H1zM11 5a4 4 0 0 1 0 6M13.500 3a7 7 0 0 1 0 10" fill="none" stroke="#ddd" /></svg>
      <div className="w-[60px] text-center leading-[17px] mr-[4px]">
        <div>10:48</div>
        <div className="whitespace-nowrap -mx-[4px]">15.02.2018</div>
      </div>
      <div className="relative w-[48px] h-full flex items-center justify-center pr-[10px]">
        <svg width="17" height="18" viewBox="0 0 17 18"><path d="M0 0h17v13H8l-4 5v-5H0z" fill="#fff" /><path d="M3 4h11M3 7h11M3 10h7" stroke="#05070c" /></svg>
        <span className="absolute left-[16px] top-[17px] w-[16px] h-[16px] rounded-full bg-[#444] text-[11px] font-bold leading-[16px] text-center">1</span>
      </div>
    </div>
  </div>
);

const Btn = ({ children, className }: { children: ReactNode; className: string }) => (
  <div className={clsx("h-[23px] border flex items-center justify-center shrink-0", className)}>{children}</div>
);

const Combo = ({ label, className }: { label: string; className: string }) => (
  <div className={clsx("h-[21px] bg-white border border-[#c0c0c0] flex items-center justify-between pl-[3px] pr-px shrink-0", className)}>
    <span>{label}</span>
    <span className="w-[16px] h-[17px] bg-[#e8e8e8] border border-[#b5b5b5] flex items-center justify-center">
      <ChevronDown size={12} strokeWidth={1.400} className="text-[#333]" />
    </span>
  </div>
);

const SortDialog = () => (
  <div className="absolute left-[588px] top-[352px] w-[693px] h-[268px] bg-[#f0f0f0] border border-[#2f86b8] shadow-[0_0_8px_rgba(0,0,0,0.35)] flex flex-col text-[#222] text-[11.800px]">
    <div className="h-[30px] bg-white flex items-center pl-[8px] shrink-0">
      <span className="text-[12px]">Sortieren</span>
      <span className="ml-auto mr-[33px] text-[13px]">?</span>
      <X size={17} strokeWidth={1.100} className="mr-[15px]" />
    </div>
    <div className="flex items-center pl-[7px] mt-[8px] h-[23px] shrink-0">
      <Btn className="w-[131px] bg-[#e5f1fb] border-[#0078d7] gap-[3px]">
        <svg width="15" height="17" viewBox="0 0 15 17" fontFamily="Liberation Sans" fontSize="7">
          <path d="M0 3h5M2.500 .5v5" stroke="#5fa58d" strokeWidth="1.300" />
          <text x="5" y="8" fill="#3f74a8">A</text>
          <text x="5" y="15" fill="#7b5ea7">Z</text>
          <path d="M12 7v8M10.500 13l1.500 2 1.500-2" fill="none" stroke="#555" />
        </svg>
        <span><u>E</u>bene hinzufügen</span>
      </Btn>
      <Btn className="w-[111px] ml-[4px] bg-[#e1e1e1] border-[#b9b9b9] gap-[2px]">
        <X size={19} strokeWidth={2.200} className="text-[#555]" />
        <span>Ebene <u>l</u>öschen</span>
      </Btn>
      <Btn className="w-[117px] ml-[4px] bg-[#e1e1e1] border-[#b9b9b9] gap-[4px]">
        <svg width="15" height="16" viewBox="0 0 15 16">
          <path d="M.5.5h7l2 2v10h-9z" fill="#fff" stroke="#777" />
          <path d="M5.500 4.500h6l3 3v8h-9z" fill="#fff" stroke="#777" />
          <path d="M7.500 9h5M7.500 11h5M7.500 13h5" stroke="#888" />
        </svg>
        <span>Ebene <u>k</u>opieren</span>
      </Btn>
      <div className="w-px h-[26px] bg-[#333] ml-[2px]" />
      <Btn className="w-[24px] ml-[3px] bg-[#d9d9d9] border-[#c6c6c6]">
        <svg width="9" height="6" viewBox="0 0 9 6"><path d="M4.500 0L9 6H0z" fill="#a8a8a8" /></svg>
      </Btn>
      <Btn className="w-[24px] ml-[4px] bg-[#d9d9d9] border-[#c6c6c6]">
        <svg width="9" height="6" viewBox="0 0 9 6"><path d="M0 0h9L4.500 6z" fill="#a8a8a8" /></svg>
      </Btn>
      <Btn className="w-[77px] ml-[4px] bg-[#e1e1e1] border-[#b9b9b9]"><span><u>O</u>ptionen...</span></Btn>
      <span className="w-[13px] h-[13px] ml-[10px] bg-white border border-[#555] flex items-center justify-center">
        <Check size={11} strokeWidth={1.500} />
      </span>
      <span className="ml-[7px] whitespace-nowrap">Daten haben Übersc<u>h</u>riften</span>
    </div>
    <div className="mt-[5px] ml-[6px] w-[679px] h-[167px] bg-white border border-[#8a8a8a] shrink-0">
      <div className="flex h-[22px]">
        <div className="w-[229px] h-full pl-[5px] leading-[23px] border-r border-[#e4e4e4]">Spalte</div>
        <div className="w-[228px] h-full pl-[4px] leading-[23px] border-r border-[#e4e4e4]">Sortieren nach</div>
        <div className="h-full pl-[4px] leading-[23px]">Reihenfolge</div>
      </div>
      <div className="flex items-center h-[21px] mx-px bg-[#dedee3]">
        <span className="w-[87px] pl-[2px] -mt-[4px] shrink-0 whitespace-nowrap">Sortieren nach</span>
        <Combo label="Klasse:" className="w-[131px]" />
        <Combo label="Werte" className="w-[217px] ml-[11px]" />
        <Combo label="A bis Z" className="w-[217px] ml-[11px]" />
      </div>
    </div>
    <div className="flex justify-end pr-[7px] mt-[5px] gap-[11px]">
      <div className="w-[74px] h-[20px] border-2 border-[#0078d7] bg-[#e1e1e1] text-center leading-[16px]">OK</div>
      <div className="w-[74px] h-[20px] border border-[#adadad] bg-[#e1e1e1] text-center leading-[18px]">Abbrechen</div>
    </div>
    <svg width="10" height="10" viewBox="0 0 10 10" className="absolute right-[1px] bottom-[1px]">
      <path d="M8 1h1v1H8zM5 4h1v1H5zM8 4h1v1H8zM2 7h1v1H2zM5 7h1v1H5zM8 7h1v1H8z" fill="#a8a8a8" />
    </svg>
  </div>
);

const Annotations = () => (
  <>
    <svg width="1916" height="1076" viewBox="0 0 1916 1076" className="absolute left-0 top-0 pointer-events-none">
      <path d="M221 290h90v563h-90z" fill="none" stroke="#e00000" strokeWidth="3" />
      <path d="M661 452L490 459L318 466" fill="none" stroke="#e00000" strokeWidth="3" />
      <path d="M342 442L316 466L343 491" fill="none" stroke="#e00000" strokeWidth="2" />
      <path d="M1117.500 478V456" fill="none" stroke="#e00000" strokeWidth="2.500" />
      <path d="M1112.500 461L1117.500 452L1122.500 461z" fill="#e00000" />
    </svg>
    <div className="absolute left-[1075px] top-[470px] text-[22.500px] leading-[26px] text-[#e00000] [font-family:'Liberation_Sans',sans-serif]">aufsteigend</div>
  </>
);

export default function App() {
  return (
    <div className="relative w-[1916px] h-[1076px] overflow-hidden flex flex-col text-[12px] [font-family:Roboto,'Noto_Sans',sans-serif]">
      <TitleBar />
      <TabRow />
      <Ribbon />
      <FormulaBar />
      <Sheet />
      <SheetTabs />
      <StatusBar />
      <Taskbar />
      <SortDialog />
      <Annotations />
    </div>
  );
}
